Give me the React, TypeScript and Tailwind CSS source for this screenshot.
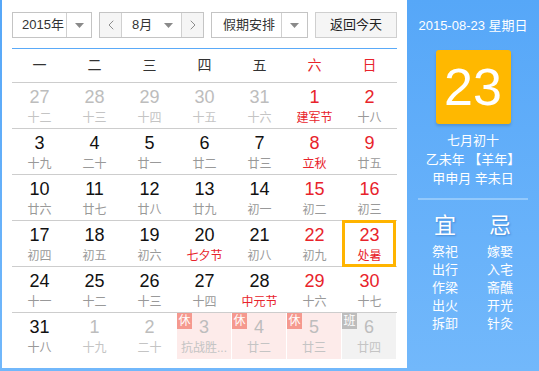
import React from 'react'
import { ChevronLeft, ChevronRight } from 'lucide-react'

type Day = {
  n: number
  lunar: string
  other?: boolean
  redNum?: boolean
  redLunar?: boolean
  today?: boolean
  tag?: '休' | '班'
}

const weekdays = ['一', '二', '三', '四', '五', '六', '日']

const rows: Day[][] = [
  [
    { n: 27, lunar: '十二', other: true },
    { n: 28, lunar: '十三', other: true },
    { n: 29, lunar: '十四', other: true },
    { n: 30, lunar: '十五', other: true },
    { n: 31, lunar: '十六', other: true },
    { n: 1, lunar: '建军节', redNum: true, redLunar: true },
    { n: 2, lunar: '十八', redNum: true },
  ],
  [
    { n: 3, lunar: '十九' },
    { n: 4, lunar: '二十' },
    { n: 5, lunar: '廿一' },
    { n: 6, lunar: '廿二' },
    { n: 7, lunar: '廿三' },
    { n: 8, lunar: '立秋', redNum: true, redLunar: true },
    { n: 9, lunar: '廿五', redNum: true },
  ],
  [
    { n: 10, lunar: '廿六' },
    { n: 11, lunar: '廿七' },
    { n: 12, lunar: '廿八' },
    { n: 13, lunar: '廿九' },
    { n: 14, lunar: '初一' },
    { n: 15, lunar: '初二', redNum: true },
    { n: 16, lunar: '初三', redNum: true },
  ],
  [
    { n: 17, lunar: '初四' },
    { n: 18, lunar: '初五' },
    { n: 19, lunar: '初六' },
    { n: 20, lunar: '七夕节', redLunar: true },
    { n: 21, lunar: '初八' },
    { n: 22, lunar: '初九', redNum: true },
    { n: 23, lunar: '处暑', redNum: true, redLunar: true, today: true },
  ],
  [
    { n: 24, lunar: '十一' },
    { n: 25, lunar: '十二' },
    { n: 26, lunar: '十三' },
    { n: 27, lunar: '十四' },
    { n: 28, lunar: '中元节', redLunar: true },
    { n: 29, lunar: '十六', redNum: true },
    { n: 30, lunar: '十七', redNum: true },
  ],
  [
    { n: 31, lunar: '十八' },
    { n: 1, lunar: '十九', other: true },
    { n: 2, lunar: '二十', other: true },
    { n: 3, lunar: '抗战胜...', other: true, tag: '休' },
    { n: 4, lunar: '廿二', other: true, tag: '休' },
    { n: 5, lunar: '廿三', other: true, tag: '休' },
    { n: 6, lunar: '廿四', other: true, tag: '班' },
  ],
]

const yi = ['祭祀', '出行', '作梁', '出火', '拆卸']
const ji = ['嫁娶', '入宅', '斋醮', '开光', '针灸']

function Caret() {
  return (
    <svg width="9" height="5" viewBox="0 0 9 5">
      <path d="M0 0 L9 0 L4.5 5 Z" fill="#8a8a8a" />
    </svg>
  )
}

function Cell({ d }: { d: Day }) {
  const numColor = d.other ? 'text-[#bdbdbd]' : d.redNum ? 'text-[#e8232b]' : 'text-[#111]'
  const lunarColor = d.other
    ? 'text-[#c4c4c4]'
    : d.redLunar
      ? 'text-[#e8232b]'
      : 'text-[#999]'
  const bg = d.tag === '休' ? 'bg-[#fdebea] mr-[1px]' : d.tag === '班' ? 'bg-[#f2f2f2] mr-[1px]' : ''
  return (
    <div className={`relative flex flex-col items-center ${bg}`}>
      {d.tag && (
        <span
          className={`absolute left-0 top-0 w-[15px] h-[16px] text-[12px] leading-[16px] text-white text-center ${
            d.tag === '休' ? 'bg-[#f5998f]' : 'bg-[#bdbdbd]'
          }`}
        >
          {d.tag}
        </span>
      )}
      {d.today && (
        <div className="absolute -top-[1px] -bottom-[1px] left-0 right-[1px] border-[3px] border-[#ffb400]"></div>
      )}
      <span className={`pt-[4px] text-[18px] leading-[20px] ${numColor}`}>{d.n}</span>
      <span className={`mt-[4px] text-[12px] leading-[14px] whitespace-nowrap ${lunarColor}`}>{d.lunar}</span>
    </div>
  )
}

export default function App() {
  return (
    <div className="w-[539px] h-[371px] flex bg-gradient-to-b from-[#56a7f8] to-[#72b8fb] font-['Liberation_Sans','Noto_Sans_CJK_SC',sans-serif]">
      {/* Calendar */}
      <div className="ml-[2px] w-[405px] h-[368px] bg-white px-[10px] pt-[12px]">
        {/* Toolbar */}
        <div className="flex h-[26px] gap-[7px] text-[13px] text-[#333]">
          <div className="w-[80px] flex border border-[#c4c4c4]">
            <span className="flex-1 pl-[9px] leading-[24px]">2015年</span>
            <span className="w-[25px] border-l border-[#d0d0d0] flex items-center justify-center">
              <Caret />
            </span>
          </div>
          <div className="w-[105px] flex border border-[#c4c4c4]">
            <span className="w-[22px] bg-[#f5f5f5] border-r border-[#d0d0d0] flex items-center justify-center">
              <ChevronLeft className="w-[16px] h-[16px] text-[#777]" strokeWidth={1.25} />
            </span>
            <span className="flex-1 flex items-center pl-[10px] pr-[8px]">
              <span className="flex-1 leading-[24px]">8月</span>
              <Caret />
            </span>
            <span className="w-[22px] bg-[#f5f5f5] border-l border-[#d0d0d0] flex items-center justify-center">
              <ChevronRight className="w-[16px] h-[16px] text-[#777]" strokeWidth={1.25} />
            </span>
          </div>
          <div className="w-[97px] flex border border-[#c4c4c4]">
            <span className="flex-1 pl-[11px] leading-[24px]">假期安排</span>
            <span className="w-[26px] border-l border-[#d0d0d0] flex items-center justify-center">
              <Caret />
            </span>
          </div>
          <div className="w-[82px] bg-[#f5f5f5] border border-[#cfcfcf] flex items-center justify-center text-[#222]">
            返回今天
          </div>
        </div>

        <div className="mt-[10px] h-[1px] bg-[#5aaaf8]"></div>

        {/* Weekday header */}
        <div className="grid grid-cols-7 h-[34px] border-b border-[#cdcdcd] text-[14px]">
          {weekdays.map((w, i) => (
            <div
              key={w}
              className={`flex items-center justify-center ${i >= 5 ? 'text-[#e8232b]' : 'text-[#333]'}`}
            >
              {w}
            </div>
          ))}
        </div>

        {/* Days */}
        {rows.map((row, ri) => (
          <div
            key={ri}
            className={`grid grid-cols-7 h-[46px] ${ri < rows.length - 1 ? 'border-b border-[#cdcdcd]' : ''}`}
          >
            {row.map((d, ci) => (
              <Cell key={ci} d={d} />
            ))}
          </div>
        ))}
      </div>

      {/* Side panel */}
      <div className="flex-1 flex flex-col items-center text-white pt-[17px]">
        <div className="text-[13px] leading-[18px]">2015-08-23 星期日</div>
        <div className="mt-[15px] w-[75px] h-[74px] bg-[#ffb800] rounded-[3px] shadow-[0_2px_3px_rgba(0,0,0,0.15)] flex items-center justify-center">
          <span className="text-[52px] leading-none">23</span>
        </div>
        <div className="mt-[7px] text-[13px] leading-[19px] text-center">
          <div>七月初十</div>
          <div>乙未年 【羊年】</div>
          <div>甲申月 辛未日</div>
        </div>
        <div className="mt-[10px] w-[110px] h-[2px] bg-[#93c9fc]"></div>
        <div className="mt-[13px] flex gap-[15px] -ml-[1px]">
          {[
            { head: '宜', items: yi },
            { head: '忌', items: ji },
          ].map((col) => (
            <div key={col.head} className="w-[40px] flex flex-col items-center">
              <span className="text-[22px] leading-[26px] [text-shadow:1px_1px_2px_rgba(0,60,140,0.35)]">
                {col.head}
              </span>
              <div className="mt-[4px] text-[13px] leading-[18px] text-center">
                {col.items.map((t) => (
                  <div key={t}>{t}</div>
                ))}
              </div>
            </div>
          ))}
        </div>
      </div>
    </div>
  )
}
